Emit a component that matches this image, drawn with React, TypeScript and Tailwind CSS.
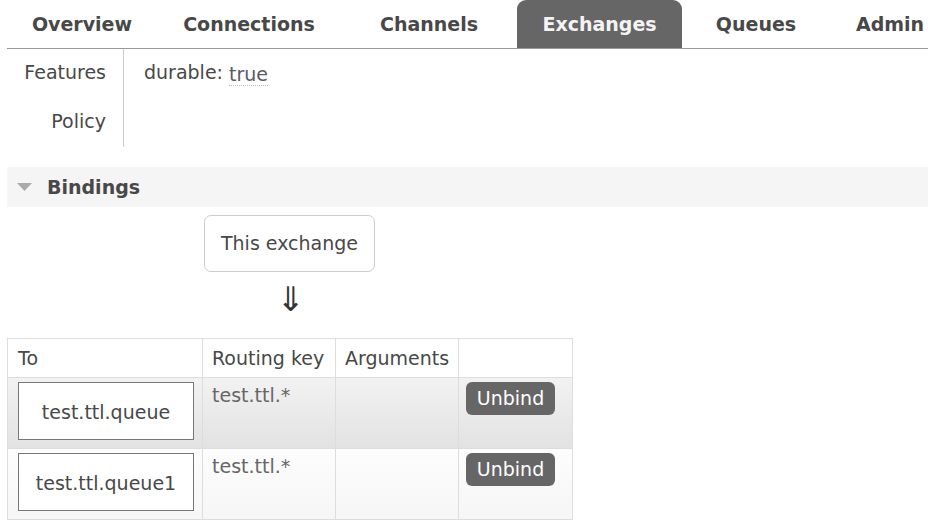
import React from 'react';

const tabs = [
    { label: 'Overview', w: 'w-[150px]' },
    { label: 'Connections', w: 'w-[184px]' },
    { label: 'Channels', w: 'w-[176px]' },
    { label: 'Exchanges', w: 'w-[165px]', active: true },
    { label: 'Queues', w: 'w-[148px]' },
];

const bindings = [
    { to: 'test.ttl.queue', key: 'test.ttl.*', row: 'bg-gradient-to-b from-[#f2f2f2] to-[#e2e2e2]' },
    { to: 'test.ttl.queue1', key: 'test.ttl.*', row: 'bg-gradient-to-b from-[#fdfdfd] to-[#f6f6f6]' },
];

const App: React.FC = () => {
    return (
        <div className="w-[928px] h-[529px] overflow-hidden bg-white text-[19px] text-[#484848] font-['DejaVu_Sans',Verdana,sans-serif]">
            {/* nav tabs */}
            <div className="ml-[7px] flex h-[49px] border-b border-[#999] font-bold whitespace-nowrap">
                {tabs.map((t) => (
                    <div
                        key={t.label}
                        className={
                            t.active
                                ? `${t.w} shrink-0 flex items-center justify-center rounded-t-[9px] bg-[#666] text-[#f4f4f4]`
                                : `${t.w} shrink-0 flex items-center justify-center`
                        }
                    >
                        {t.label}
                    </div>
                ))}
                <div className="shrink-0 flex items-center pl-[26px]">Admin</div>
            </div>

            {/* details */}
            <div className="ml-[7px] flex">
                <div className="w-[117px] border-r border-[#ccc] pr-[17px] text-right">
                    <div className="h-[47px] flex items-center justify-end">Features</div>
                    <div className="h-[51px] flex items-center justify-end">Policy</div>
                </div>
                <div className="pl-[20px]">
                    <div className="h-[47px] flex items-center">
                        durable:&nbsp;
                        <span className="translate-y-[2px] border-b border-dotted border-[#bbb] text-[#59596a] leading-[22px]">true</span>
                    </div>
                </div>
            </div>

            {/* bindings section */}
            <div className="ml-[7px] mt-[20px] h-[40px] bg-[#f5f5f5] flex items-center font-bold">
                <svg width="15" height="8" viewBox="0 0 15 8" className="ml-[10px] mr-[15px]">
                    <path d="M0 0 L15 0 L7.5 8 Z" fill="#aaa" />
                </svg>
                Bindings
            </div>

            <div className="ml-[204px] mt-[8px] w-[171px] h-[57px] rounded-[7px] border border-[#ccc] flex items-center justify-center">
                This exchange
            </div>
            <div className="ml-[204px] w-[171px] h-[66px] flex items-start justify-center pt-[10px] pl-[2px]">
                <span className="text-[34px] leading-[34px] text-[#333]">⇓</span>
            </div>

            <table className="ml-[7px] table-fixed border-collapse">
                <colgroup>
                    <col className="w-[195px]" />
                    <col className="w-[133px]" />
                    <col className="w-[123px]" />
                    <col className="w-[114px]" />
                </colgroup>
                <thead>
                    <tr className="h-[39px]">
                        <th className="border border-[#ddd] pl-[10px] text-left font-normal">To</th>
                        <th className="border border-[#ddd] pl-[9px] text-left font-normal">Routing key</th>
                        <th className="border border-[#ddd] pl-[9px] text-left font-normal">Arguments</th>
                        <th className="border border-[#ddd]"></th>
                    </tr>
                </thead>
                <tbody>
                    {bindings.map((b) => (
                        <tr key={b.to} className={`h-[71px] ${b.row}`}>
                            <td className="border border-[#ddd] pl-[10px] pt-[4px] align-top">
                                <div className="w-[176px] h-[58px] border border-[#777] bg-white flex items-center justify-center pt-[2px]">
                                    {b.to}
                                </div>
                            </td>
                            <td className="border border-[#ddd] pl-[9px] pt-[3px] align-top text-[#666]">{b.key}</td>
                            <td className="border border-[#ddd]"></td>
                            <td className="border border-[#ddd] pl-[7px] pt-[4px] align-top">
                                <div className="w-[89px] h-[33px] rounded-[6px] bg-[#666] text-white flex items-center justify-center">
                                    Unbind
                                </div>
                            </td>
                        </tr>
                    ))}
                </tbody>
            </table>
        </div>
    );
};

export default App;
